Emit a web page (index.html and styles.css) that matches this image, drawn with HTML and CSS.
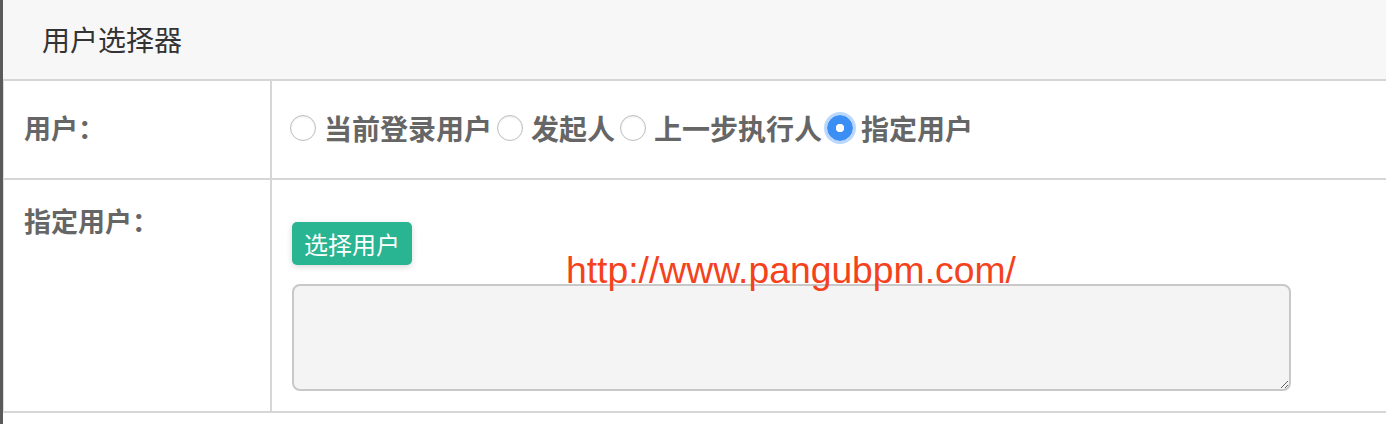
FILE: index.html
```html
<!DOCTYPE html>
<html lang="zh">
<head>
    <meta charset="UTF-8">
    <meta name="viewport" content="width=device-width, initial-scale=1.0">
    <title>用户选择器</title>
    <link rel="stylesheet" href="styles.css">
</head>
<body>
    <div class="page">
        <div class="backdrop"></div>

        <div class="dialog">
            <div class="dialog-header">
                <h3 class="dialog-title">用户选择器</h3>
            </div>

            <div class="form-grid">
                <!-- 用户类型 -->
                <div class="form-label row-user">用户：</div>
                <div class="form-field row-user">
                    <label class="radio"><input type="radio" name="userType" value="current">当前登录用户</label>
                    <label class="radio"><input type="radio" name="userType" value="starter">发起人</label>
                    <label class="radio"><input type="radio" name="userType" value="prev">上一步执行人</label>
                    <label class="radio"><input type="radio" name="userType" value="assign" checked>指定用户</label>
                </div>

                <!-- 指定用户 -->
                <div class="form-label row-assign">指定用户：</div>
                <div class="form-field row-assign">
                    <button class="btn-pick" type="button">选择用户</button>
                    <textarea class="user-list" readonly></textarea>
                </div>
            </div>

            <div class="watermark">http://www.pangubpm.com/</div>
        </div>
    </div>
</body>
</html>
```

FILE: styles.css
```css
body {
    margin: 0;
    font-family: 'Noto Sans CJK SC', sans-serif;
    background-color: #fff;
    color: #333;
}
.page {
    display: flex;
    height: 424px;
    overflow: hidden;
}
.backdrop {
    width: 3px;
    flex-shrink: 0;
    background-color: #5a5a5a;
}
.dialog {
    flex: 1;
    position: relative;
}
.dialog-header {
    height: 79px;
    background-color: #f7f7f7;
    border-bottom: 2px solid #d6d6d6;
    padding-left: 39px;
}
.dialog-title {
    margin: 0;
    font-size: 28px;
    font-weight: 400;
    line-height: 79px;
    color: #333;
}
.form-grid {
    display: grid;
    grid-template-columns: 268px 1fr;
    border-left: 1px solid #dcdcdc;
}
.form-label,
.form-field {
    box-sizing: border-box;
    border-bottom: 2px solid #d6d6d6;
}
.form-label {
    border-right: 2px solid #d6d6d6;
    padding-left: 20px;
    font-size: 27px;
    font-weight: 700;
    color: #666;
    line-height: 38px;
}
.row-user {
    height: 99px;
    display: flex;
    align-items: center;
    padding-bottom: 4px;
}
.form-field.row-user {
    padding-left: 18px;
}
.row-assign {
    height: 233px;
}
.form-label.row-assign {
    padding-top: 22px;
}
.form-field.row-assign {
    padding: 42px 20px 0 20px;
}
.radio {
    display: inline-flex;
    align-items: center;
    gap: 8px;
    margin-right: 5px;
    font-size: 28px;
    font-weight: 700;
    color: #666;
    cursor: pointer;
}
.radio input {
    appearance: none;
    -webkit-appearance: none;
    width: 26px;
    height: 26px;
    margin: 0;
    border: 1px solid #bdbdbd;
    border-radius: 50%;
    background-color: #fff;
    box-shadow: inset 0 1px 2px rgba(0,0,0,0.08);
}
.radio input:checked {
    border-color: #3b8ef4;
    background: radial-gradient(circle, #fff 0 4px, #3b8ef4 4.5px);
    box-shadow: 0 0 0 3px rgba(59,142,244,0.35);
}
.btn-pick {
    display: block;
    height: 43px;
    padding: 0 12px;
    border: none;
    border-radius: 5px;
    background-color: #29b492;
    color: #fff;
    font-family: inherit;
    font-size: 24px;
    box-shadow: 0 2px 6px rgba(0,0,0,0.15);
    cursor: pointer;
}
.user-list {
    display: block;
    box-sizing: border-box;
    width: 999px;
    height: 107px;
    margin-top: 19px;
    border: 2px solid #c8c8c8;
    border-radius: 8px;
    background-color: #f4f4f4;
    font-family: inherit;
}
.watermark {
    position: absolute;
    left: 563px;
    top: 250px;
    font-family: 'Liberation Sans', sans-serif;
    font-size: 37.3px;
    line-height: 40px;
    color: #f4421d;
    pointer-events: none;
}
```
